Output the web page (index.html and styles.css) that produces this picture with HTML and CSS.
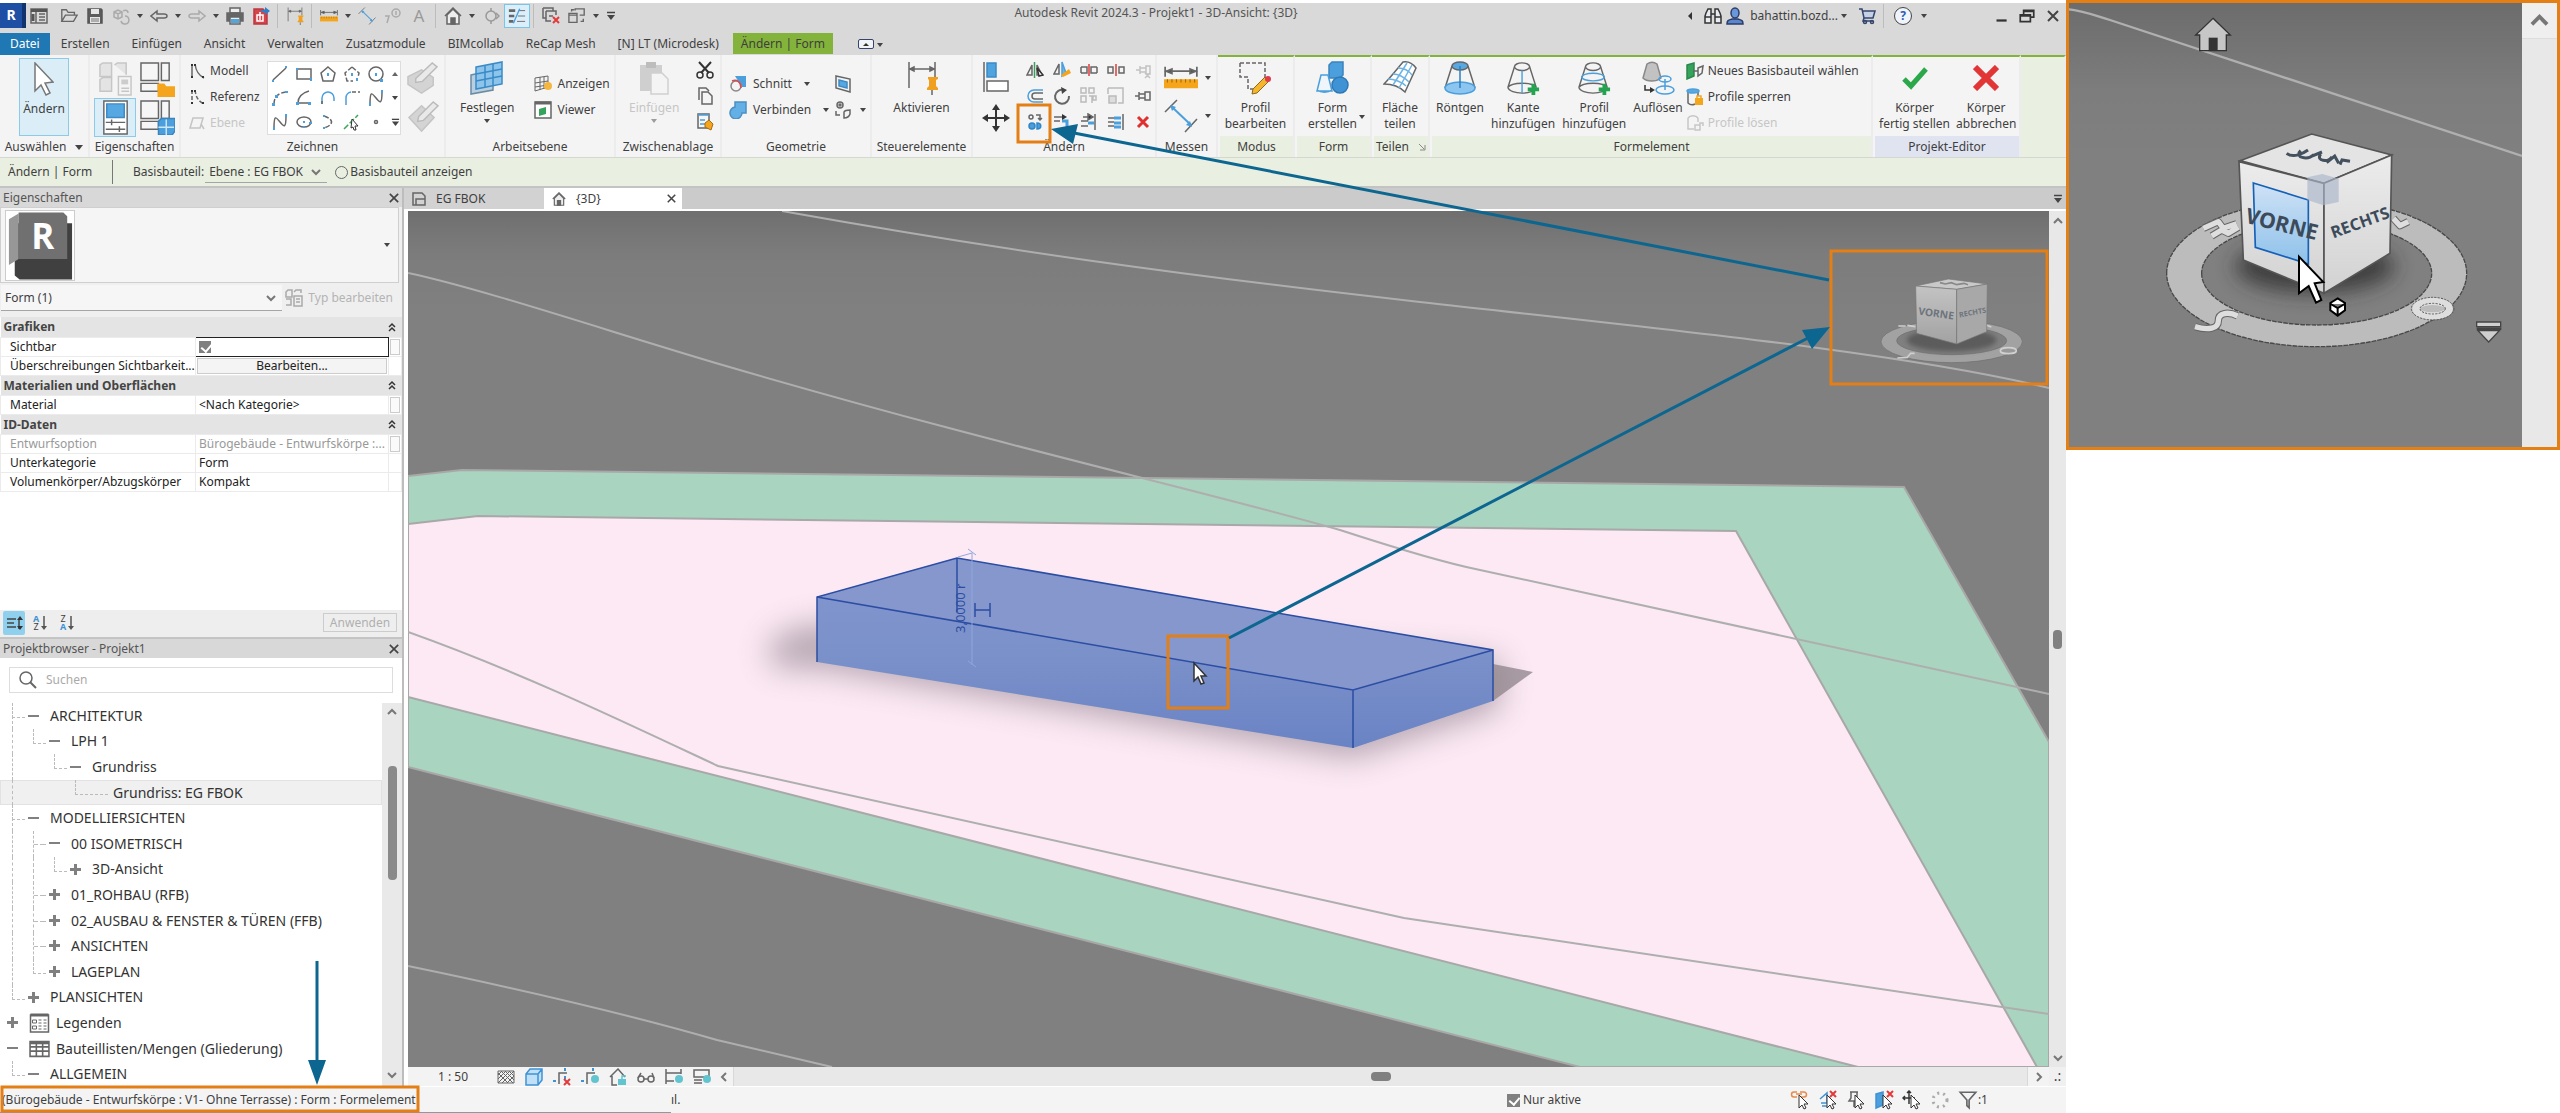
FILE: index.html
```html
<!DOCTYPE html>
<html lang="de">
<head>
<meta charset="utf-8">
<title>Autodesk Revit 2024.3 - Projekt1 - 3D-Ansicht: {3D}</title>
<link rel="stylesheet" href="styles.css">
</head>
<body>
<svg class="sprite" aria-hidden="true">
<defs>
<symbol id="i-list" viewBox="0 0 18 18"><path d="M1 2h16v14H1zM6 2v14M9 7h6M9 10h6M9 13h6" /><path d="M1 3.500h16M3 7v7" stroke-width="3" stroke="#555"/></symbol>
<symbol id="i-folder" viewBox="0 0 20 18"><path d="M2 15V2h5l2 3h7v3M2 15l4-7h13l-4 7z"/></symbol>
<symbol id="i-save" viewBox="0 0 18 18"><path d="M2 2h13l1 1v13H2z" fill="#5c5c5c" stroke="#555"/><path d="M5 2h8v5H5zM4 10h10v6H4z" fill="#e6e6e6" stroke="none"/><path d="M5 12h8M5 14h8" stroke="#777" stroke-width="1"/></symbol>
<symbol id="i-sync" viewBox="0 0 18 18"><path d="M2 5l4-2 4 2v5L6 12l-4-2zM2 5l4 2 4-2M6 7v5M11 4c3-2 5 0 5 2M13 9a4 4 0 1 1-4 5" stroke="#aaa"/></symbol>
<symbol id="i-undo" viewBox="0 0 18 14"><path d="M7 2L1 7l6 5V9h7c2 0 3-1 3-2s-1-2-3-2H7z"/></symbol>
<symbol id="i-print" viewBox="0 0 18 18"><path d="M4 1h10v5H4z" fill="#eee"/><path d="M1 6h16v8H1z" fill="#666"/><path d="M4 10h10v7H4z" fill="#eee"/><path d="M5 12h8v4H5z" fill="#55a5dd" stroke="none"/></symbol>
<symbol id="i-pdf" viewBox="0 0 18 18"><path d="M2 2h9l4 4v11H2z" fill="#d8434a" stroke="#b93a40"/><path d="M5 8h6v6H5zM8 5v8" stroke="#fff"/><path d="M9 4h6" stroke="#2c80c8" stroke-width="2"/><path d="M13 0l5 4-5 4z" fill="#2c80c8" stroke="none"/></symbol>
<symbol id="i-dimpin" viewBox="0 0 30 34"><path d="M2 1v26M28 1v15M3 8h24M3 8l4-2v4zM27 8l-4-2v4z" fill="#555"/><path d="M21 16h10v2l-2 1v6l2 2v2H20v-2l2-2v-6l-1-1z" fill="#f0a01e" stroke="none"/><path d="M25 29v5"/></symbol>
<symbol id="i-measure" viewBox="0 0 30 24"><path d="M1 2v9M29 2v9M2 6h26"/><path d="M2 6l5-2v4zM28 6l-5-2v4z" fill="#555"/><path d="M0 13h30v8H0z" fill="#f5a51c" stroke="none"/><path d="M3 13v3M7 13v3M11 13v3M15 13v3M19 13v3M23 13v3M27 13v3" stroke="#a96a00" stroke-width="1"/></symbol>
<symbol id="i-dim" viewBox="0 0 34 34"><path d="M1 13L13 1M21 33L33 20"/><path d="M8 8l19 18" stroke="#4b9fdc" stroke-width="2"/><path d="M6 6l6 2-4 4zM28 28l-6-2 4-4z" fill="#4b9fdc" stroke="none"/></symbol>
<symbol id="i-tag" viewBox="0 0 18 18"><circle cx="12" cy="6" r="4" stroke="#aaa"/><path d="M12 4v4M1 9h4l-2 7" stroke="#aaa"/></symbol>
<symbol id="i-home" viewBox="0 0 18 18"><path d="M1 9l8-8 8 8" /><path d="M3 8v9h12V8L9 2z" fill="#eee"/><path d="M7 11h4v6H7z" fill="#666"/></symbol>
<symbol id="i-diamond" viewBox="0 0 18 18"><circle cx="9" cy="9" r="5" stroke="#999"/><path d="M9 1v3M9 14v3M14 6l3 3-3 3" stroke="#999"/></symbol>
<symbol id="i-thin" viewBox="0 0 20 18"><path d="M1 3h7M1 9h6M1 15h5" stroke-width="3"/><path d="M12 3h7M11 9h8M10 15h9" stroke-width="1"/><path d="M13 1L6 17" stroke="#4b9fdc"/></symbol>
<symbol id="i-closewin" viewBox="0 0 18 18"><path d="M1 1h10v3M1 1v10h3M4 4h10v4M4 4v10h5M7 9h4"/><path d="M11 10l6 6M17 10l-6 6" stroke="#e23b3b" stroke-width="2"/></symbol>
<symbol id="i-wins" viewBox="0 0 20 18"><path d="M1 6h9v10H1zM1 8h9M8 3V1h10v7h-5M4 4V2h3M14 15h3v-3"/></symbol>
<symbol id="i-more" viewBox="0 0 10 10"><path d="M1 1.500h8" stroke="#444"/><path d="M1 4h8L5 9z" fill="#444" stroke="none"/></symbol>
<symbol id="i-bino" viewBox="0 0 18 16"><path d="M2 5l2-4h3v14H1V8zM16 5l-2-4h-3v14h6V8zM7 6h4M1 9h6M11 9h6" fill="#e8ecf2" stroke="#333"/></symbol>
<symbol id="i-user" viewBox="0 0 18 18"><path d="M1 17c0-4 2-4 5-5h6c3 1 5 1 5 5z" fill="#5a86cd" stroke="#2b3c66"/><ellipse cx="9" cy="6" rx="4" ry="5" fill="#6a96dc" stroke="#2b3c66"/></symbol>
<symbol id="i-cart" viewBox="0 0 18 18"><path d="M1 2h3l2 9h9l2-7H5M6 11l-1 3h10" stroke="#34446c" fill="#c5d0e4"/><circle cx="7" cy="15" r="1.500" stroke="#34446c"/><circle cx="14" cy="15" r="1.500" stroke="#34446c"/></symbol>
<symbol id="i-min" viewBox="0 0 16 16"><path d="M4 12h9" stroke="#333" stroke-width="2"/></symbol>
<symbol id="i-restore" viewBox="0 0 16 16"><path d="M2 7h9v6H2zM5 7V3h9v6h-3M2 8h9M5 4h9" stroke="#333"/></symbol>
<symbol id="i-x" viewBox="0 0 12 12"><path d="M1 1l10 10M11 1L1 11" stroke="#444" stroke-width="2"/></symbol>
<symbol id="i-pointer" viewBox="0 0 20 34"><path d="M1 1l18 19-8 1 5 10-4 2-5-10-6 6z" fill="#fff" stroke="#777"/></symbol>
<symbol id="i-type" viewBox="0 0 36 36"><path d="M2 3l3-2h9v14H2zM17 3l3-2h9v12M2 18l3-2h9v14H2z" fill="#e4e4e4" stroke="#c6c6c6"/><path d="M21 15h13v19H21z" fill="#f4f4f4" stroke="#c6c6c6"/><path d="M24 18h7v5h-7z" fill="#ccc" stroke="none"/><path d="M24 27h8M24 30h8" stroke="#c6c6c6"/></symbol>
<symbol id="i-fam" viewBox="0 0 36 36"><path d="M1 1h18v18H1zM22 1h8v18h-8zM1 22h18v8H1z" fill="#f6f6f6"/><path d="M18 22h7l2 3h9v11H18z" fill="#f5a51c" stroke="none"/></symbol>
<symbol id="i-props" viewBox="0 0 36 36"><path d="M6 1h24v34H6z" fill="#fff"/><path d="M9 4h18v14H9z" fill="#56a8e2" stroke="#3d8ac4"/><path d="M8 23h20M8 30h20M14 20v6M22 27v6"/></symbol>
<symbol id="i-fam2" viewBox="0 0 36 36"><path d="M1 1h18v18H1zM22 1h8v18h-8zM1 22h18v8H1z" fill="#f6f6f6"/><path d="M19 22l3-3h14v13l-3 4H19z" fill="#4b9fdc" stroke="#3a84bd"/><path d="M27 20v16M19 28h16" stroke="#cfe6f6"/></symbol>
<symbol id="i-curve" viewBox="0 0 16 16"><path d="M3 1v13M6 1c1 7 3 11 9 14" /><path d="M2 1h2v2H2zM5 1h2v2H5zM13 13h2v2h-2zM2 13h2v2H2z" fill="#333" stroke="none"/></symbol>
<symbol id="i-ref" viewBox="0 0 16 16"><path d="M3 1v13M6 1c1 7 3 11 9 14" stroke-dasharray="4 2"/><path d="M2 1h2v2H2zM5 1h2v2H5zM13 13h2v2h-2zM2 13h2v2H2z" fill="#333" stroke="none"/></symbol>
<symbol id="i-plane" viewBox="0 0 16 16"><path d="M4 3h10l-3 10H1zM12 9l3 5" stroke="#c4c4c4"/></symbol>
<symbol id="g-line" viewBox="0 0 18 18"><path d="M2 15L15 3"/><path d="M1 15h2v2H1zM14 1h2v2h-2z" fill="#4b9fdc" stroke="none"/></symbol>
<symbol id="g-rect" viewBox="0 0 18 18"><path d="M2 4h14v10H2z"/><path d="M1 3h2v2H1zM15 13h2v3h-2z" fill="#4b9fdc" stroke="none"/></symbol>
<symbol id="g-poly" viewBox="0 0 18 18"><path d="M9 2l7 6-2 8H4L2 8z"/><path d="M8 8h2v3H8z" fill="#4b9fdc" stroke="none"/></symbol>
<symbol id="g-poly2" viewBox="0 0 18 18"><path d="M9 2L2 8l2 8h6M9 2l7 6-1 4" stroke-dasharray="5 2"/><path d="M8 8h2v3H8zM13 13h2v3h-2z" fill="#4b9fdc" stroke="none"/></symbol>
<symbol id="g-circ" viewBox="0 0 18 18"><circle cx="9" cy="9" r="7"/><path d="M8 8h2v3H8zM13 14h3v3h-3z" fill="#4b9fdc" stroke="none"/></symbol>
<symbol id="g-arc" viewBox="0 0 18 18"><path d="M3 15C3 8 7 4 15 3" stroke-dasharray="5 2"/><path d="M1 14h3v3H1zM4 6h3v3H4zM14 2h3v2h-3z" fill="#4b9fdc" stroke="none"/></symbol>
<symbol id="g-arc2" viewBox="0 0 18 18"><path d="M14 2C7 4 3 8 3 14h11"/><path d="M1 13h3v3H1zM13 13h3v3h-3z" fill="#4b9fdc" stroke="none"/></symbol>
<symbol id="g-arc3" viewBox="0 0 18 18"><path d="M3 15V9a6 6 0 0 1 12 0v3" stroke="#4b9fdc"/><path d="M3 15v-3"/></symbol>
<symbol id="g-fillet" viewBox="0 0 18 18"><path d="M3 16V9a6 6 0 0 1 5-6" stroke="#4b9fdc"/><path d="M9 3h8" stroke-dasharray="4 2"/></symbol>
<symbol id="g-spline" viewBox="0 0 18 18"><path d="M3 15C3 1 5 4 9 9s6 7 6-6"/><path d="M2 14h2v3H2zM14 1h2v3h-2z" fill="#4b9fdc" stroke="none"/></symbol>
<symbol id="g-ell" viewBox="0 0 18 18"><ellipse cx="9" cy="9" rx="7" ry="5"/><path d="M8 8h2v2H8zM14 9h3v2h-3zM8 13h2v2H8z" fill="#4b9fdc" stroke="none"/></symbol>
<symbol id="g-earc" viewBox="0 0 18 18"><path d="M5 3c10 3 10 9 0 12" stroke-dasharray="5 2"/><path d="M4 2h2v2H4zM4 14h2v2H4z" fill="#4b9fdc" stroke="none"/></symbol>
<symbol id="g-pick" viewBox="0 0 18 18"><path d="M1 16L15 2" stroke="#3aa85a" stroke-dasharray="6 2"/><path d="M9 6l6 7h-3l1 4-2 0-1-3-2 1z" fill="#fff" stroke="#333" stroke-width="1"/></symbol>
<symbol id="g-point" viewBox="0 0 18 18"><circle cx="9" cy="9" r="1.500"/></symbol>
<symbol id="i-face" viewBox="0 0 34 34"><path d="M1 16L15 9l12 8v8l-12 8-14-9z" fill="#d4d4d4" stroke="#c4c4c4"/><path d="M9 18L26 2l5 4-15 15-7 1z" fill="#e9e9e9" stroke="#bbb"/></symbol>
<symbol id="i-face2" viewBox="0 0 34 34"><path d="M2 18L15 6l13 12-13 14z" fill="#d4d4d4" stroke="#c4c4c4"/><path d="M12 17L27 2l5 4-15 15-6 1z" fill="#e9e9e9" stroke="#bbb"/></symbol>
<symbol id="i-work" viewBox="0 0 34 34"><path d="M1 14l22-5v20L1 33z" fill="#b9cfdf" stroke="#6a8ba2"/><path d="M6 6l26-5v22L6 28z" fill="#8cc4ec" stroke="#3a8ac6"/><path d="M15 4v22M23 3v22M6 13l26-5M6 20l26-5" stroke="#3a8ac6"/></symbol>
<symbol id="i-show" viewBox="0 0 18 18"><path d="M1 3l13-2v11L1 16zM6 2v13M10 2v12M1 8l13-2M1 12l13-2" stroke-width="1"/><circle cx="14" cy="11" r="4" fill="#f5b541" stroke="none"/></symbol>
<symbol id="i-viewer" viewBox="0 0 18 18"><path d="M1 1h16v16H1z" fill="#fff" stroke="#666"/><path d="M1 2h16" stroke-width="3"/><path d="M5 8l7-2v7l-7 2z" fill="#35a35c" stroke="none"/></symbol>
<symbol id="i-paste" viewBox="0 0 30 34"><path d="M1 4h22v26H1z" fill="#cfcfcf" stroke="none"/><path d="M7 1h10v6H7z" fill="#bdbdbd" stroke="none"/><path d="M12 12h11l6 6v15H12z" fill="#f4f4f4" stroke="#d0d0d0"/></symbol>
<symbol id="i-cut" viewBox="0 0 18 18"><path d="M3 1l10 11M15 1L5 12" stroke="#333" stroke-width="2"/><circle cx="4" cy="14" r="3" stroke="#333"/><circle cx="14" cy="14" r="3" stroke="#333"/></symbol>
<symbol id="i-copy" viewBox="0 0 18 18"><path d="M3 13V1h7l3 3M6 5h6l4 4v8H6z"/></symbol>
<symbol id="i-match" viewBox="0 0 18 18"><path d="M2 1h11v14H2z" fill="#f6f6f6"/><path d="M2 2h11M4 7h5M4 11h5" stroke="#4b9fdc"/><path d="M9 10l4-3 4 4-2 6-6-3z" fill="#f5a51c" stroke="#a66e10" stroke-width="1"/></symbol>
<symbol id="i-cope" viewBox="0 0 18 18"><path d="M6 1h11v11h-4z" fill="#4b9fdc" stroke="none"/><circle cx="7" cy="11" r="5" stroke="#888" fill="#f4f4f4"/><path d="M3 6c5-2 9 1 9 7" stroke="#dc4a4a"/></symbol>
<symbol id="i-join" viewBox="0 0 18 18"><path d="M6 1h11v11h-4a6 6 0 1 1-7-6z" fill="#62b0e6" stroke="#4b8fc4"/></symbol>
<symbol id="i-wallo" viewBox="0 0 18 18"><path d="M2 1l14 3v13L2 13z"/><path d="M5 5l8 2v6l-8-2z" fill="#56a8e2" stroke="#3d8ac4"/></symbol>
<symbol id="i-demol" viewBox="0 0 18 18"><circle cx="6" cy="4" r="3"/><circle cx="6" cy="4" r="1"/><path d="M2 10v4h4M10 11c1-2 3-2 6-2v4c-1 3-3 4-6 4z"/></symbol>
<symbol id="i-align" viewBox="0 0 28 32"><path d="M2 1v30"/><path d="M5 2h9v14H5z" fill="#4fa4e0" stroke="#3d8ac4"/><path d="M5 20h21v10H5z" fill="#fff"/></symbol>
<symbol id="i-move" viewBox="0 0 28 28"><path d="M14 4v20M4 14h20" stroke="#333" stroke-width="2"/><path d="M14 0l4 6h-8zM14 28l4-6h-8zM0 14l6-4v8zM28 14l-6-4v8z" fill="#333" stroke="none"/></symbol>
<symbol id="m-mir" viewBox="0 0 18 18"><path d="M6 4v10H1zM11 4l5 10h-5z"/><path d="M8.500 1v16" stroke="#35a35c"/><path d="M11 7l6 7-4 1z" fill="#fff" stroke="#333"/></symbol>
<symbol id="m-mir2" viewBox="0 0 18 18"><path d="M6 3v10H1z"/><path d="M9 1v14l4-3z" fill="#72b5e6" stroke="#4b9fdc"/><path d="M8 14l8-6 2 4-8 4z" fill="#f5a51c" stroke="none"/></symbol>
<symbol id="m-split" viewBox="0 0 18 18"><path d="M1 6h6v6H1M17 6h-6v6h6M1 6v6M17 6v6"/><path d="M9 3v12" stroke="#e23b3b"/></symbol>
<symbol id="m-split2" viewBox="0 0 18 18"><path d="M1 6h5v6H1zM12 6h5v6h-5z"/><path d="M9 3v12" stroke="#e23b3b"/></symbol>
<symbol id="m-unpin" viewBox="0 0 18 18"><path d="M2 9h4M6 5v8M6 7h6M6 11h6M12 5v8h4V5zM11 12l5 5M16 12l-5 5" stroke="#c2c2c2"/></symbol>
<symbol id="m-offset" viewBox="0 0 18 18"><path d="M17 3H8a6 6 0 0 0 0 12h9" stroke="#4b9fdc"/><path d="M17 6H9a3 3 0 0 0 0 6h8"/></symbol>
<symbol id="m-rot" viewBox="0 0 18 18"><path d="M11 3a7 7 0 1 0 5 6" stroke-width="2"/><path d="M8 0l6 3-5 4z" fill="#444" stroke="none"/></symbol>
<symbol id="m-array" viewBox="0 0 18 18"><path d="M1 1h5v5H1zM9 1h5v5H9zM1 9h5v6H1zM9 9h3v7M13 9h3v4h-3z" stroke="#bbb"/></symbol>
<symbol id="m-scale" viewBox="0 0 18 18"><path d="M1 1h15v15h-5M1 1v6" stroke="#bbb"/><path d="M2 9h7v7H2z" fill="#ddd" stroke="#bbb"/></symbol>
<symbol id="m-pin" viewBox="0 0 18 18"><path d="M1 9h4M5 5v8M5 7h6M5 11h6M11 5v8h5V5z"/></symbol>
<symbol id="m-copy" viewBox="0 0 18 18"><circle cx="5" cy="4" r="2"/><path d="M10 2h4v5M12 5l2 2 2-2"/><circle cx="6" cy="13" r="3" fill="#4b9fdc" stroke="#2f86c8"/><path d="M11 10c5 0 5 6 0 6z" fill="#4b9fdc" stroke="#2f86c8"/></symbol>
<symbol id="m-trim" viewBox="0 0 18 18"><path d="M1 4h9M1 8h6M14 8v8"/><path d="M9 8h5v7" stroke="#4b9fdc" stroke-width="3"/><path d="M9 1l5 3-5 3z" fill="#333" stroke="none"/></symbol>
<symbol id="m-ext" viewBox="0 0 18 18"><path d="M15 1v16M1 8h7M1 13h7" /><path d="M8 10h6" stroke="#4b9fdc" stroke-width="3"/><path d="M3 4h5M8 1l5 3-5 3z" fill="#333"/></symbol>
<symbol id="m-ext2" viewBox="0 0 18 18"><path d="M16 1v16M1 5h6M1 9h6M1 13h6" /><path d="M7 5h7M7 10h7M7 14h7" stroke="#4b9fdc" stroke-width="3"/></symbol>
<symbol id="m-del" viewBox="0 0 18 18"><path d="M4 4l10 10M14 4L4 14" stroke="#e02f2f" stroke-width="3"/></symbol>
<symbol id="i-editprof" viewBox="0 0 34 34"><path d="M2 2h25v14M2 2v14h8v12h6" stroke-dasharray="4 2"/><path d="M15 28L27 16l4 4-12 12-5 1z" fill="#f5b52c" stroke="#8a6a20" stroke-width="1"/><circle cx="30" cy="18" r="3" fill="#df3b4a" stroke="none"/></symbol>
<symbol id="i-form" viewBox="0 0 34 34"><path d="M14 4l3-3h11v13l-3 3H14z" fill="#4b9fdc" stroke="#3a84bd"/><path d="M6 14h7l4 16H2zM2 29c4 3 11 3 15 0" stroke="#4b9fdc" fill="#eef6fc"/><circle cx="25" cy="24" r="8" fill="#3f93d4" stroke="#2f78b4"/></symbol>
<symbol id="i-divide" viewBox="0 0 34 34"><path d="M20 1c5-1 10 2 13 6L22 31c-5-5-13-8-21-8C8 16 14 8 20 1z" fill="#fff"/><path d="M24 2L10 24M29 4L16 27M15 7c6 0 11 3 14 7M10 13c6 0 12 4 16 8M5 18c6 0 14 3 18 7" stroke="#6db3e4"/></symbol>
<symbol id="i-xray" viewBox="0 0 32 34"><path d="M8 5L1 27M24 5l7 22"/><ellipse cx="16" cy="5" rx="8" ry="4" fill="#58a8e2"/><ellipse cx="16" cy="27" rx="15" ry="6" fill="#8cc6f0" stroke="#4b9fdc"/><path d="M16 5v22" stroke="#2d7fc0"/></symbol>
<symbol id="i-edge" viewBox="0 0 36 34"><path d="M9 5L2 27M25 5l7 22M2 27c2 8 28 8 30 0M2 27c4-6 26-6 30 0" /><ellipse cx="17" cy="5" rx="8" ry="4"/><path d="M17 9v24" stroke="#4b9fdc"/><path d="M29 23v12M23 29h12" stroke="#23a550" stroke-width="4"/></symbol>
<symbol id="i-addprof" viewBox="0 0 36 34"><path d="M9 5L2 27M25 5l7 22M2 27c2 8 28 8 30 0M2 27c4-6 26-6 30 0" /><ellipse cx="17" cy="5" rx="8" ry="4"/><ellipse cx="17" cy="16" rx="12" ry="4" stroke="#4b9fdc"/><path d="M29 23v12M23 29h12" stroke="#23a550" stroke-width="4"/></symbol>
<symbol id="i-dissolve" viewBox="0 0 34 34"><path d="M6 3c3-2 7-2 10 0l4 14c-5 4-14 4-18 0z" fill="#c2c2c2" stroke="#888"/><path d="M4 24v5h6" stroke="#333"/><path d="M9 26l5 3-5 3z" fill="#333" stroke="none"/><ellipse cx="24" cy="18" rx="6" ry="3" stroke="#4b9fdc"/><ellipse cx="24" cy="29" rx="9" ry="4" stroke="#4b9fdc"/><path d="M24 18v11" stroke="#4b9fdc"/></symbol>
<symbol id="i-host" viewBox="0 0 18 18"><path d="M1 3l7-2v13l-7 3z" fill="#35a35c" stroke="#2a874a"/><path d="M7 9h5M12 6l5-2-1 7-4 3z"/></symbol>
<symbol id="i-lock" viewBox="0 0 18 18"><path d="M2 4v11c2 2 5 2 7 1M12 4v4"/><ellipse cx="7" cy="3" rx="6" ry="2" fill="#58a8e2" stroke="#4b9fdc"/><path d="M9 10h8v7H9z" fill="#f5a51c" stroke="none"/><path d="M11 10V8h4v2" stroke="#f5a51c"/></symbol>
<symbol id="i-unlock" viewBox="0 0 18 18"><path d="M2 4v11h6M12 4v4M2 4c2-3 8-3 10 0M9 11h5v5H9zM14 11V9h3v3" stroke="#c6c6c6"/></symbol>
<symbol id="i-check" viewBox="0 0 26 26"><path d="M2 14l7 7L24 4" stroke="#2ba84a" stroke-width="5"/></symbol>
<symbol id="i-cancel" viewBox="0 0 26 26"><path d="M2 2l22 22M24 2L2 24" stroke="#e23636" stroke-width="6"/></symbol>
<symbol id="i-launch" viewBox="0 0 8 8"><path d="M1 1l5 5M7 2v5H2" stroke="#888" stroke-width="1"/></symbol>
<symbol id="i-chev" viewBox="0 0 10 10"><path d="M1 3l4 4 4-4" stroke="#777" stroke-width="2"/></symbol>
<symbol id="i-coll" viewBox="0 0 8 10"><path d="M1 5l3-3 3 3M1 9l3-3 3 3" stroke="#333"/></symbol>
<symbol id="i-grp" viewBox="0 0 18 18"><path d="M2 5h9M2 9h7M2 13h9M14 5v10" stroke="#444"/><path d="M12 6l3-4 3 4zM12 12l3 4 3-4z" fill="#333" stroke="none"/></symbol>
<symbol id="i-arrdn" viewBox="0 0 6 16"><path d="M3 1v12" stroke="#555"/><path d="M0 11h6l-3 4z" fill="#555" stroke="none"/></symbol>
<symbol id="i-search" viewBox="0 0 18 18"><circle cx="7" cy="7" r="6"/><path d="M11 11l6 6" stroke-width="2"/></symbol>
<symbol id="i-legend" viewBox="0 0 20 20"><path d="M1 2h18v17H1z"/><path d="M1 2h18" stroke-width="3"/><path d="M3 7h4v3H3zM3 13h4v3H3zM9 7h3M14 7h3M9 10h3M14 10h3M9 13h3M14 13h3M9 16h3M14 16h3" stroke-width="1"/></symbol>
<symbol id="i-sched" viewBox="0 0 20 18"><path d="M1 2h18v14H1zM1 7h18M1 11h18M7 2v14M13 2v14"/><path d="M1 3h18" stroke-width="3"/></symbol>
<symbol id="v-hatch" viewBox="0 0 18 14"><path d="M1 1h16v12H1z" stroke-width="1"/><path d="M1 3l10 10M4 1l12 12M8 1l9 9M12 1l5 5M5 13L17 1M1 13L13 1M1 9l8-8M10 13l7-7M1 5l4-4" stroke-width="1"/></symbol>
<symbol id="v-cube" viewBox="0 0 18 18"><path d="M1 6l4-5h12v11l-4 5H1zM1 6h12M13 6v11M13 6l4-5" fill="#bfe0f6" stroke="#3f93d4"/></symbol>
<symbol id="v-crop" viewBox="0 0 18 18"><path d="M6 16V5h8"/><path d="M0 13h3M12 0v3M12 8v3" stroke="#3f93d4" stroke-width="2"/></symbol>
<symbol id="v-house" viewBox="0 0 18 18"><path d="M1 9l8-8 7 8M3 8v9h5"/><path d="M9 11h8v6H9z" fill="#62c4cf" stroke="none"/><path d="M13 11V8h4" stroke="#62c4cf"/></symbol>
<symbol id="v-glass" viewBox="0 0 18 12"><circle cx="4" cy="8" r="3"/><circle cx="14" cy="8" r="3"/><path d="M7 8h4M1 7l3-5M17 7l-2-5"/></symbol>
<symbol id="v-con" viewBox="0 0 18 18"><path d="M1 1v15M16 1v5M1 5h15M1 13h8"/></symbol>
<symbol id="v-con2" viewBox="0 0 18 18"><path d="M1 2h15v7H1zM1 12h8M1 15h8"/></symbol>
<symbol id="s-cur" viewBox="0 0 20 20"><path d="M9 5l9 9h-4l2 4-2 1-2-4-3 3z" fill="#fff" stroke="#333" stroke-width="1"/></symbol>
<symbol id="s-filter" viewBox="0 0 16 18"><path d="M1 2h14L9 9v7l-2-2V9z"/></symbol>
</defs>
</svg>

<div class="page">
<main class="app">

<header class="titlebar">
  <div class="quick">
    <span class="logo">R</span>
    <button class="q gap" aria-label="Start"><svg><use href="#i-list"/></svg></button>
    <button class="q" aria-label="Öffnen"><svg><use href="#i-folder"/></svg></button>
    <button class="q" aria-label="Speichern"><svg><use href="#i-save"/></svg></button>
    <button class="q" aria-label="Synchronisieren"><svg><use href="#i-sync"/></svg></button>
    <button class="drop" aria-label="Mehr"></button>
    <button class="q" aria-label="Rückgängig"><svg><use href="#i-undo"/></svg></button>
    <button class="drop" aria-label="Mehr"></button>
    <button class="q faint flip" aria-label="Wiederherstellen"><svg><use href="#i-undo"/></svg></button>
    <button class="drop" aria-label="Mehr"></button>
    <button class="q" aria-label="Drucken"><svg><use href="#i-print"/></svg></button>
    <button class="q" aria-label="PDF"><svg><use href="#i-pdf"/></svg></button>
    <i class="sep"></i>
    <button class="q" aria-label="Aktivieren"><svg><use href="#i-dimpin"/></svg></button>
    <i class="sep"></i>
    <button class="q" aria-label="Messen"><svg><use href="#i-measure"/></svg></button>
    <button class="drop" aria-label="Mehr"></button>
    <button class="q" aria-label="Bemaßung"><svg><use href="#i-dim"/></svg></button>
    <button class="q" aria-label="Beschriftung"><svg><use href="#i-tag"/></svg></button>
    <button class="q letter">A</button>
    <i class="sep"></i>
    <button class="q" aria-label="3D"><svg><use href="#i-home"/></svg></button>
    <button class="drop" aria-label="Mehr"></button>
    <button class="q" aria-label="Schnitt"><svg><use href="#i-diamond"/></svg></button>
    <button class="q on" aria-label="Dünne Linien"><svg><use href="#i-thin"/></svg></button>
    <i class="sep"></i>
    <button class="q" aria-label="Inaktive schließen"><svg><use href="#i-closewin"/></svg></button>
    <button class="q" aria-label="Fenster"><svg><use href="#i-wins"/></svg></button>
    <button class="drop" aria-label="Mehr"></button>
    <button class="drop wide" aria-label="Anpassen"><svg><use href="#i-more"/></svg></button>
  </div>
  <h1>Autodesk Revit 2024.3 - Projekt1 - 3D-Ansicht: {3D}</h1>
  <div class="account">
    <button class="back" aria-label="Zurück"></button>
    <button class="q" aria-label="Suchen"><svg><use href="#i-bino"/></svg></button>
    <button class="user"><svg><use href="#i-user"/></svg>bahattin.bozd...</button>
    <button class="drop" aria-label="Mehr"></button>
    <button class="q cart" aria-label="Shop"><svg><use href="#i-cart"/></svg></button>
    <i class="sep"></i>
    <button class="help">?</button>
    <button class="drop" aria-label="Mehr"></button>
    <div class="win">
      <button class="q" aria-label="Minimieren"><svg><use href="#i-min"/></svg></button>
      <button class="q" aria-label="Wiederherstellen"><svg><use href="#i-restore"/></svg></button>
      <button class="q x" aria-label="Schließen"><svg><use href="#i-x"/></svg></button>
    </div>
  </div>
</header>

<nav class="tabs">
  <a href="#" class="file">Datei</a><a href="#">Erstellen</a><a href="#">Einfügen</a><a href="#">Ansicht</a><a href="#">Verwalten</a><a href="#">Zusatzmodule</a><a href="#">BIMcollab</a><a href="#">ReCap Mesh</a><a href="#">[N] LT (Microdesk)</a><a href="#" class="ctx">Ändern | Form</a>
  <button class="fold" aria-label="Multifunktionsleiste minimieren"><i></i></button><button class="drop" aria-label="Mehr"></button>
</nav>

<section class="ribbon">
  <div class="panel"><div class="body center">
    <button class="big active"><svg class="ptr"><use href="#i-pointer"/></svg>Ändern</button></div>
    <div class="cap">Auswählen<i class="tri"></i></div></div>

  <div class="panel"><div class="body quad">
    <button aria-label="Familientypen"><svg><use href="#i-type"/></svg></button><button aria-label="Familie"><svg><use href="#i-fam"/></svg></button>
    <button class="active" aria-label="Eigenschaften"><svg><use href="#i-props"/></svg></button><button aria-label="Kategorie"><svg><use href="#i-fam2"/></svg></button></div>
    <div class="cap">Eigenschaften</div></div>

  <div class="panel"><div class="body draw">
    <div class="stack"><button class="row"><svg><use href="#i-curve"/></svg>Modell</button><button class="row"><svg><use href="#i-ref"/></svg>Referenz</button><button class="row off"><svg><use href="#i-plane"/></svg>Ebene</button></div>
    <div class="gallery">
      <svg><use href="#g-line"/></svg><svg><use href="#g-rect"/></svg><svg><use href="#g-poly"/></svg><svg><use href="#g-poly2"/></svg><svg><use href="#g-circ"/></svg><i class="tri up"></i>
      <svg><use href="#g-arc"/></svg><svg><use href="#g-arc2"/></svg><svg><use href="#g-arc3"/></svg><svg><use href="#g-fillet"/></svg><svg><use href="#g-spline"/></svg><i class="tri"></i>
      <svg><use href="#g-spline"/></svg><svg><use href="#g-ell"/></svg><svg><use href="#g-earc"/></svg><svg><use href="#g-pick"/></svg><svg><use href="#g-point"/></svg><svg class="more"><use href="#i-more"/></svg>
    </div>
    <div class="faces"><svg><use href="#i-face"/></svg><svg><use href="#i-face2"/></svg></div></div>
    <div class="cap">Zeichnen</div></div>

  <div class="panel"><div class="body work">
    <button class="big"><svg><use href="#i-work"/></svg>Festlegen<i class="tri"></i></button>
    <div class="stack two"><button class="row"><svg><use href="#i-show"/></svg>Anzeigen</button><button class="row"><svg><use href="#i-viewer"/></svg>Viewer</button></div></div>
    <div class="cap">Arbeitsebene</div></div>

  <div class="panel"><div class="body clip">
    <button class="big off"><svg><use href="#i-paste"/></svg>Einfügen<i class="tri"></i></button>
    <div class="stack"><svg><use href="#i-cut"/></svg><svg><use href="#i-copy"/></svg><svg><use href="#i-match"/></svg></div></div>
    <div class="cap">Zwischenablage</div></div>

  <div class="panel"><div class="body geo">
    <div class="stack two"><button class="row"><svg><use href="#i-cope"/></svg>Schnitt<i class="tri"></i></button><button class="row"><svg><use href="#i-join"/></svg>Verbinden<i class="tri"></i></button></div>
    <div class="stack two"><button class="row" aria-label="Öffnung"><svg><use href="#i-wallo"/></svg></button><button class="row" aria-label="Abbruch"><svg><use href="#i-demol"/></svg><i class="tri"></i></button></div></div>
    <div class="cap">Geometrie</div></div>

  <div class="panel"><div class="body center"><button class="big"><svg><use href="#i-dimpin"/></svg>Aktivieren</button></div>
    <div class="cap">Steuerelemente</div></div>

  <div class="panel"><div class="body modify">
    <div class="pair"><svg><use href="#i-align"/></svg><svg><use href="#i-move"/></svg></div>
    <div class="tools">
      <svg><use href="#m-mir"/></svg><svg><use href="#m-mir2"/></svg><svg><use href="#m-split"/></svg><svg><use href="#m-split2"/></svg><svg><use href="#m-unpin"/></svg>
      <svg><use href="#m-offset"/></svg><svg><use href="#m-rot"/></svg><svg><use href="#m-array"/></svg><svg><use href="#m-scale"/></svg><svg><use href="#m-pin"/></svg>
      <svg><use href="#m-copy"/></svg><svg><use href="#m-trim"/></svg><svg><use href="#m-ext"/></svg><svg><use href="#m-ext2"/></svg><svg><use href="#m-del"/></svg>
    </div></div>
    <div class="cap">Ändern</div></div>

  <div class="panel"><div class="body meas">
    <svg><use href="#i-measure"/></svg><i class="tri"></i><svg><use href="#i-dim"/></svg><i class="tri"></i></div>
    <div class="cap">Messen</div></div>

  <div class="panel green"><div class="body center"><button class="big"><svg><use href="#i-editprof"/></svg>Profil<br>bearbeiten</button></div>
    <div class="cap">Modus</div></div>
  <div class="panel green"><div class="body center"><button class="big aside"><svg><use href="#i-form"/></svg>Form<br>erstellen<i class="tri"></i></button></div>
    <div class="cap">Form</div></div>
  <div class="panel green"><div class="body center"><button class="big"><svg><use href="#i-divide"/></svg>Fläche<br>teilen</button></div>
    <div class="cap">Teilen<svg><use href="#i-launch"/></svg></div></div>
  <div class="panel green"><div class="body element">
    <button class="big"><svg><use href="#i-xray"/></svg>Röntgen</button><button class="big"><svg><use href="#i-edge"/></svg>Kante<br>hinzufügen</button><button class="big"><svg><use href="#i-addprof"/></svg>Profil<br>hinzufügen</button><button class="big"><svg><use href="#i-dissolve"/></svg>Auflösen</button>
    <div class="stack"><button class="row"><svg><use href="#i-host"/></svg>Neues Basisbauteil wählen</button><button class="row"><svg><use href="#i-lock"/></svg>Profile sperren</button><button class="row off"><svg><use href="#i-unlock"/></svg>Profile lösen</button></div></div>
    <div class="cap">Formelement</div></div>
  <div class="panel green editor"><div class="body finish">
    <button class="big"><svg><use href="#i-check"/></svg>Körper<br>fertig stellen</button><button class="big"><svg><use href="#i-cancel"/></svg>Körper<br>abbrechen</button></div>
    <div class="cap">Projekt-Editor</div></div>
  <div class="panel green rest"></div>
</section>

<section class="options">
  <span class="mode">Ändern | Form</span>
  <label for="host">Basisbauteil:</label>
  <span class="pick"><select id="host"><option>Ebene : EG FBOK</option></select><svg><use href="#i-chev"/></svg></span>
  <label class="radio"><input type="radio" name="show">Basisbauteil anzeigen</label>
</section>

<div class="work-area">
  <aside class="side">
    <section class="props">
      <h2>Eigenschaften<button aria-label="Schließen"><svg><use href="#i-x"/></svg></button></h2>
      <div class="typebox">
        <svg class="thumb" viewBox="0 0 70 70"><path d="M12 12h56v58H14l-5-4V48z" fill="#404040"/><path d="M3 8l10-6v47L3 55z" fill="#979797"/><path d="M13 1h46l4 4v44H13z" fill="#707070"/><text x="38" y="39" text-anchor="middle">R</text></svg>
        <i class="tri"></i>
      </div>
      <div class="instance">
        <span class="pick"><select aria-label="Element"><option>Form (1)</option></select><svg><use href="#i-chev"/></svg></span>
        <button disabled><svg viewBox="0 0 18 18"><path d="M1 3l2-2h4v7H1zM9 3l2-2h5v3M1 10h5v6H1M9 7h8v10H9zM11 10h4M11 13h4"/></svg>Typ bearbeiten</button>
      </div>
      <table>
        <colgroup><col class="c1"><col class="c2"><col class="c3"></colgroup>
        <tbody>
        <tr class="head"><th colspan="2">Grafiken</th><td><svg><use href="#i-coll"/></svg></td></tr>
        <tr><td><label for="vis">Sichtbar</label></td><td class="focus"><input id="vis" type="checkbox" checked></td><td><button aria-label="Parameter"></button></td></tr>
        <tr><td>Überschreibungen Sichtbarkeit...</td><td class="edit"><button>Bearbeiten...</button></td><td></td></tr>
        <tr class="head"><th colspan="2">Materialien und Oberflächen</th><td><svg><use href="#i-coll"/></svg></td></tr>
        <tr><td>Material</td><td>&lt;Nach Kategorie&gt;</td><td><button aria-label="Parameter"></button></td></tr>
        <tr class="head"><th colspan="2">ID-Daten</th><td><svg><use href="#i-coll"/></svg></td></tr>
        <tr class="ro"><td>Entwurfsoption</td><td>Bürogebäude - Entwurfskörpe :...</td><td><button aria-label="Parameter"></button></td></tr>
        <tr><td>Unterkategorie</td><td>Form</td><td></td></tr>
        <tr><td>Volumenkörper/Abzugskörper</td><td>Kompakt</td><td></td></tr>
        </tbody>
      </table>
      <div class="sort">
        <button class="on" aria-label="Gruppieren"><svg><use href="#i-grp"/></svg></button>
        <button aria-label="Aufsteigend"><span><b>A</b>Z</span><svg><use href="#i-arrdn"/></svg></button>
        <button aria-label="Absteigend"><span>Z<b>A</b></span><svg><use href="#i-arrdn"/></svg></button>
        <button class="apply" disabled>Anwenden</button>
      </div>
    </section>

    <section class="browser">
      <h2>Projektbrowser - Projekt1<button aria-label="Schließen"><svg><use href="#i-x"/></svg></button></h2>
      <label class="search"><svg><use href="#i-search"/></svg><input type="text" placeholder="Suchen" aria-label="Suchen"></label>
      <div class="treebox">
        <ul class="tree">
          <li class="l1 minus g"><i></i>ARCHITEKTUR</li>
          <li class="l2 minus g last trunk"><i></i>LPH 1</li>
          <li class="l3 minus g last trunk"><i></i>Grundriss</li>
          <li class="l4 g last sel trunk"><i></i>Grundriss: EG FBOK</li>
          <li class="l1 minus g"><i></i>MODELLIERSICHTEN</li>
          <li class="l2 minus g trunk"><i></i>00 ISOMETRISCH</li>
          <li class="l3 plus g last two trunk"><i></i>3D-Ansicht</li>
          <li class="l2 plus g trunk"><i></i>01_ROHBAU (RFB)</li>
          <li class="l2 plus g trunk"><i></i>02_AUSBAU &amp; FENSTER &amp; TÜREN (FFB)</li>
          <li class="l2 plus g trunk"><i></i>ANSICHTEN</li>
          <li class="l2 plus g last trunk"><i></i>LAGEPLAN</li>
          <li class="l1 plus g last"><i></i>PLANSICHTEN</li>
          <li class="l0 plus"><i></i><svg><use href="#i-legend"/></svg>Legenden</li>
          <li class="l0 minus"><i></i><svg><use href="#i-sched"/></svg>Bauteillisten/Mengen (Gliederung)</li>
          <li class="l1 minus g last"><i></i>ALLGEMEIN</li>
        </ul>
        <div class="vbar"><svg class="up"><use href="#i-chev"/></svg><i></i><svg><use href="#i-chev"/></svg></div>
      </div>
    </section>
  </aside>

  <section class="view">
    <nav class="viewtabs">
      <a href="#"><svg viewBox="0 0 14 14"><path d="M1 1h9l3 3v9H1zM4 13V7h9"/></svg>EG FBOK</a>
      <a href="#" class="cur"><svg><use href="#i-home"/></svg>{3D}<svg class="x"><use href="#i-x"/></svg></a>
      <svg class="menu"><use href="#i-more"/></svg>
    </nav>
    <div class="stage">
      <svg class="scene" viewBox="408 211 1641 856" preserveAspectRatio="none">
        <defs>
          <linearGradient id="sky" x1="0" y1="0" x2="0" y2="1"><stop offset="0" stop-color="#6f6f6f"/><stop offset=".05" stop-color="#7c7c7c"/><stop offset=".12" stop-color="#808080"/></linearGradient>
          <linearGradient id="blk" x1="0" y1="0" x2="0" y2="1"><stop offset="0" stop-color="#8396cf"/><stop offset=".5" stop-color="#7b91ca"/><stop offset="1" stop-color="#6a83c4"/></linearGradient>
          <linearGradient id="cubeL" x1="0" y1="0" x2="0" y2="1"><stop offset="0" stop-color="#c3c3c3"/><stop offset="1" stop-color="#a2a2a2"/></linearGradient>
          <filter id="soft" x="-20%" y="-60%" width="140%" height="220%"><feGaussianBlur stdDeviation="16"/></filter>
          <filter id="soft2" x="-20%" y="-40%" width="140%" height="180%"><feGaussianBlur stdDeviation="8"/></filter>
        </defs>
        <path d="M408 211h1641v856H408z" fill="url(#sky)"/>
        <path d="M408 476L462 470L1904 487L2049 742V1067H1580L408 767z" fill="#a9d4bf" stroke="#a8a8a8" stroke-width="2"/>
        <path d="M408 524L478 516L1736 531L2037 1067H1858L408 697z" fill="#fce9f4" stroke="#a8a8a8" stroke-width="2"/>
        <g fill="none" stroke="#aeaeae" stroke-width="2">
          <path d="M782 211C1000 250 1180 275 1420 302S1900 352 2049 388"/>
          <path d="M408 273C480 288 620 335 726 366C1000 446 1200 490 1340 530C1420 556 1460 566 1480 570L2049 694"/>
          <path d="M408 632C520 672 620 720 718 766L1404 918L2049 1014"/>
          <path d="M408 966C500 985 620 1012 717 1040L832 1067"/>
        </g>
        <path d="M817 625C770 630 755 655 780 668L817 668L1353 758L1500 708L1500 660z" fill="#5f555f" opacity=".45" filter="url(#soft)"/>
        <path d="M1493 664L1533 672L1493 701z" fill="#8d8288" opacity=".75"/>
        <path d="M817 597L957 558L1493 650V701L1353 748L817 662z" fill="url(#blk)"/>
        <path d="M817 597L957 558L1493 650L1353 690z" fill="#8597cc"/>
        <path d="M817 662V597L957 558L1493 650V701M817 597L1353 690L1493 650M1353 690V748M957 558V612" fill="none" stroke="#2b4da3" stroke-width="1.500"/>
        <path d="M972 553V665M958 557l14-4M968 549l8 6M968 661l8 6" fill="none" stroke="#8ea6de" stroke-width="1"/>
        <path d="M975 603v14M990 603v14M975 610h15" fill="none" stroke="#2b4da3" stroke-width="1.500"/>
        <text class="dimtext" transform="translate(965 633) rotate(-90)">3,0000 r</text>
        <path d="M1194 663l12 13h-5l3 7-3 1-3-7-4 4z" fill="#fff" stroke="#333"/>
        <svg x="1829" y="249" width="220" height="136" viewBox="117 207 660 408">
          <path fill-rule="evenodd" d="M273 485a212 63 0 0 1 424 0a212 63 0 0 1-424 0M320 482a165 42 0 0 0 330 0a165 42 0 0 0-330 0" fill="#a2a2a2" stroke="#6e6e6e" stroke-width="2"/>
          <ellipse cx="485" cy="480" rx="135" ry="34" fill="#5c5c5c" filter="url(#soft2)"/>
          <ellipse cx="655" cy="512" rx="24" ry="9" fill="#999" stroke="#d0d0d0" stroke-width="5"/>
          <path d="M325 438h22M352 436l24 4M322 534l30-2 10-12h12M590 436l14 5" stroke="#cfcfcf" stroke-width="5" fill="none"/>
          <path d="M377 318L475 297L592 312L500 328z" fill="#c9c9c9" stroke="#777" stroke-width="2"/>
          <path d="M377 318L500 328V492L380 460z" fill="url(#cubeL)" stroke="#777" stroke-width="2"/>
          <path d="M500 328L592 312L590 455L500 492z" fill="#a8a8a8" stroke="#777" stroke-width="2"/>
          <text class="face" font-size="31" text-anchor="middle" transform="translate(437 411) rotate(8)">VORNE</text>
          <text class="face" font-size="22" text-anchor="middle" transform="translate(549 405) rotate(-10)">RECHTS</text>
          <path d="M450 308l16 4 18-4 16 6 22-4 12 4" stroke="#888" stroke-width="5" fill="none"/>
        </svg>
      </svg>
      <div class="vscroll"><svg class="up"><use href="#i-chev"/></svg><i></i><svg><use href="#i-chev"/></svg></div>
      <div class="viewbar">
        <span>1 : 50</span>
        <svg><use href="#v-hatch"/></svg><svg><use href="#v-cube"/></svg>
        <svg viewBox="0 0 18 18"><use href="#v-crop"/><path d="M11 11l6 6M17 11l-6 6" stroke="#e23b3b" stroke-width="2"/></svg>
        <svg viewBox="0 0 18 18"><use href="#v-crop"/><circle cx="14" cy="11" r="4" fill="#62c4cf" stroke="none"/></svg>
        <svg><use href="#v-house"/></svg><svg><use href="#v-glass"/></svg>
        <svg viewBox="0 0 18 18"><use href="#v-con"/><circle cx="14" cy="11" r="4" fill="#62c4cf" stroke="none"/></svg>
        <svg viewBox="0 0 18 18"><use href="#v-con2"/><circle cx="14" cy="11" r="4" fill="#62c4cf" stroke="none"/></svg>
        <svg class="left"><use href="#i-chev"/></svg>
        <div class="track"><i></i></div>
        <svg class="right"><use href="#i-chev"/></svg>
      </div>
      <div class="grip">.:</div>
    </div>
  </section>
</div>

<footer class="status">
  <span class="hint">(Bürogebäude - Entwurfskörpe : V1- Ohne Terrasse) : Form : Formelement</span>
  <span class="bars">ıl.</span>
  <label class="only"><input type="checkbox" checked>Nur aktive</label>
  <div class="sel-tools">
    <svg viewBox="0 0 20 20"><path d="M7 7H4a2 2 0 0 1 0-5h3M10 2h4a2 2 0 0 1 0 5h-4M6 4h6" stroke="#e88a4a"/><use href="#s-cur"/></svg>
    <svg viewBox="0 0 20 20"><path d="M2 9l7-6v10H3M4 16h6" stroke="#3f93d4"/><use href="#s-cur"/><path d="M12 1l6 6M18 1l-6 6" stroke="#e23b3b" stroke-width="2"/></svg>
    <svg viewBox="0 0 20 20"><path d="M4 2h8M5 2v6l-2 3h10l-2-3V2M8 11v6"/><use href="#s-cur"/></svg>
    <svg viewBox="0 0 20 20"><path d="M2 4l7-2v13l-7 3z" fill="#4b9fdc" stroke="#3f93d4"/><use href="#s-cur"/><path d="M13 1l6 6M19 1l-6 6" stroke="#e23b3b" stroke-width="2"/></svg>
    <svg viewBox="0 0 20 20"><path d="M7 1v13M1 8h12M5 3l2-2 2 2M3 6L1 8l2 2" stroke="#333"/><use href="#s-cur"/></svg>
    <svg viewBox="0 0 20 20"><circle cx="10" cy="10" r="7" stroke="#aaa" stroke-width="3" stroke-dasharray="2 4"/></svg>
    <svg><use href="#s-filter"/></svg><span>:1</span>
  </div>
</footer>

<svg class="marks" viewBox="0 0 2066 1113" preserveAspectRatio="none" aria-hidden="true">
  <g fill="none" stroke="#e37f14" stroke-width="3">
    <path d="M1018 105h32v37h-32zM1168 636h60v72h-60zM1831 251h216v133h-216z"/><path d="M2 1087h416v24H2z"/>
  </g>
  <g fill="none" stroke="#0c6690" stroke-width="3"><path d="M1829 280L1074 133M1229 638L1808 338M317 961V1062"/></g>
  <path d="M1051 129L1078 124L1073 144zM1830 327L1802 330L1812 349zM317 1085L308 1060H326z" fill="#0c6690"/>
</svg>
</main>

<aside class="inset">
  <svg class="closeup" viewBox="27 9 1359 1332" preserveAspectRatio="none">
    <defs>
      <linearGradient id="top2" x1="0" y1="0" x2="0" y2="1"><stop offset="0" stop-color="#6c6c6c"/><stop offset=".2" stop-color="#7d7d7d"/><stop offset=".35" stop-color="#808080"/></linearGradient>
      <linearGradient id="fl" x1="0" y1="0" x2="0" y2="1"><stop offset="0" stop-color="#ececec"/><stop offset="1" stop-color="#d2d2d2"/></linearGradient>
      <linearGradient id="fb" x1="0" y1="0" x2="0" y2="1"><stop offset="0" stop-color="#cfe2f6"/><stop offset="1" stop-color="#8ec1ea"/></linearGradient>
      <filter id="soft3" x="-30%" y="-60%" width="160%" height="220%"><feGaussianBlur stdDeviation="30"/></filter>
    </defs>
    <path d="M27 9h1359v1332H27z" fill="url(#top2)"/>
    <path d="M27 28C60 30 80 38 150 60L1386 468" fill="none" stroke="#b0b0b0" stroke-width="7"/>
    <path d="M459 55l52 50h-12v47h-80v-47h-12z" fill="#c6c6c6" stroke="#333" stroke-width="4"/><path d="M446 113h27v40h-27z" fill="#333"/>
    <path fill-rule="evenodd" d="M320 820a450 220 0 0 1 900 0a450 220 0 0 1-900 0M425 820a345 155 0 0 0 690 0a345 155 0 0 0-690 0" fill="#bcbcbc" stroke="#484848" stroke-width="4" stroke-dasharray="14 3"/>
    <ellipse cx="765" cy="800" rx="240" ry="80" fill="#2c2c2c" opacity=".75" filter="url(#soft3)"/>
    <ellipse cx="1118" cy="926" rx="50" ry="22" fill="none" stroke="#dedede" stroke-width="22"/><ellipse cx="1118" cy="926" rx="64" ry="34" fill="none" stroke="#555" stroke-width="3" stroke-dasharray="6 4"/><ellipse cx="1118" cy="926" rx="38" ry="16" fill="none" stroke="#555" stroke-width="3" stroke-dasharray="6 4"/>
    <g fill="none" stroke-linejoin="round">
      <path d="M405 980c40 12 70 6 70-18s30-28 58-14M430 685l45-20 15 20 40-14M455 708l30-18 20 10 30-18M1000 655l20 22 25-12" stroke="#666" stroke-width="22"/>
      <path d="M405 980c40 12 70 6 70-18s30-28 58-14M430 685l45-20 15 20 40-14M455 708l30-18 20 10 30-18M1000 655l20 22 25-12" stroke="#dedede" stroke-width="16"/>
    </g>
    <g stroke="#555" stroke-width="5">
      <path d="M540 482L755 402L995 465L792 550z" fill="#e4e4e4"/>
      <path d="M537 485L792 550V880L550 780z" fill="url(#fl)"/>
      <path d="M792 550L995 465L990 760L792 880z" fill="url(#fl)"/>
    </g>
    <path d="M680 460c20 16 50 0 64 -10M722 452c-20 20 20 30 40 12M752 470l34 -14M782 462c-16 22 24 26 34 8M800 488l24 -20 12 22M840 494l6 -14 24 4" fill="none" stroke="#43505e" stroke-width="9"/>
    <path d="M580 549L745 600V792L586 742z" fill="url(#fb)" stroke="#1560b8" stroke-width="5"/>
    <path d="M742 532l45-10 49 14v70l-46 10-48-16z" fill="#aab5ca" opacity=".65"/>
    <text class="face2" font-size="64" text-anchor="middle" transform="translate(660 694) rotate(14)">VORNE</text>
    <text class="face2" font-size="49" text-anchor="middle" transform="translate(906 684) rotate(-20)">RECHTS</text>
    <path d="M717 770L790 846L764 850L784 900L768 908L746 858L717 880z" fill="#fff" stroke="#000" stroke-width="6"/>
    <path d="M833 895l22 14v22l-22 16-22-16v-22zM812 912l21 12 21-12M833 924v22" fill="#fff" stroke="#000" stroke-width="6"/>
    <path d="M1250 966h72v14h-72zM1254 992h64l-32 34z" fill="#cfcfcf" stroke="#444" stroke-width="4"/><path d="M1250 986h74" stroke="#444" stroke-width="8"/>
  </svg>
  <div class="closebar"><svg class="up"><use href="#i-chev"/></svg></div>
</aside>
</div>
</body>
</html>
```
FILE: styles.css
```css
* { box-sizing: border-box; }
body { margin: 0; background: #fff; color: #3f3f3f; font: 12px/16px "Noto Sans", "Open Sans", sans-serif; }
button, input, select { font: inherit; color: inherit; }
button { border: 0; padding: 0; margin: 0; background: none; }
svg { fill: none; stroke: #666; stroke-width: 1.5px; display: block; flex: none; }
.sprite { position: absolute; width: 0; height: 0; }
a { color: inherit; text-decoration: none; }
h1, h2 { margin: 0; font-size: 12px; font-weight: 400; }

.page { display: grid; grid-template-columns: 2066fr 494fr; align-items: start; }
.app { position: relative; display: flex; flex-direction: column; height: 100vh; min-width: 0; padding-top: 3px; }
.tri { width: 0; height: 0; border: 3px solid transparent; border-top: 4px solid #444; border-bottom: 0; flex: none; }
.tri.up { border-top: 0; border-bottom: 4px solid #666; transform: none; }

/* title bar */
.titlebar { display: grid; grid-template-columns: 1010fr auto 765fr; height: 30px; background: #d9d9d9; }
.quick { display: flex; align-items: center; height: 25px; }
.logo { width: 26px; height: 25px; background: #1d4fa5; border-right: 4px solid #12346e; color: #fff; font-weight: 700; font-size: 14px; line-height: 24px; text-align: center; }
.q { width: 26px; height: 24px; display: flex; align-items: center; justify-content: center; flex: none; }
.q svg { width: 18px; height: 18px; }
.q.gap { margin-right: 4px; }
.q.letter { font-size: 17px; color: #999; }
.q.on { background: #dbeefa; border: 1px solid #7cc3e8; }
.q.faint { opacity: .4; }
.q.flip svg { transform: scaleX(-1); }
.q.x svg { width: 12px; height: 12px; }
.drop { width: 12px; height: 24px; display: flex; align-items: center; justify-content: center; flex: none; }
.drop:empty::before { content: ""; border: 3px solid transparent; border-top: 4px solid #444; border-bottom: 0; }
.drop.wide { width: 18px; }
.drop svg { width: 10px; height: 10px; }
.sep { width: 1px; height: 24px; margin: 0 4px 0 3px; background: #bcbcbc; }
.titlebar h1 { padding-top: 2px; color: #555; white-space: nowrap; }
.account { display: flex; align-items: center; justify-content: flex-end; height: 25px; }
.back { width: 12px; }
.back::before { content: ""; display: block; width: 0; border: 4px solid transparent; border-right-color: #333; border-left: 0; }
.user { display: flex; align-items: center; gap: 6px; }
.user svg { width: 18px; height: 18px; }
.cart { margin-left: 4px; }
.help { width: 18px; height: 18px; margin: 0 6px; border: 1px solid #444; border-radius: 9px; background: #f0f4fb; color: #2b5fb4; font-weight: 700; line-height: 16px; }
.win { display: flex; margin-left: 58px; }

.tabs { display: flex; height: 22px; background: #d9d9d9; line-height: 21px; }
.tabs a { padding: 0 11px; white-space: nowrap; }
.tabs .file { background: #1f77b4; color: #fff; padding: 0 10px; }
.tabs .ctx { background: #83b33a; padding: 0 8px; margin: 0 25px 0 3px; height: 21px; }
.fold { width: 16px; height: 10px; margin: 6px 0; border: 1px solid #34446c; border-radius: 2px; background: #f2f4f8; display: flex; align-items: center; justify-content: center; }
.fold i { border: 3px solid transparent; border-bottom: 3px solid #333; border-top: 0; }

/* ribbon */
.ribbon { display: grid; height: 102px; background: #f4f4f4;
  grid-template-columns: 90fr 91fr 265fr 170fr 106fr 150fr 101fr 184fr 61fr 77fr 77fr 58fr 443fr 148fr 45fr; }
.panel { display: flex; flex-direction: column; min-width: 0; border-right: 2px solid #ececec; }
.body { flex: 1; display: flex; padding: 6px 0 0; min-height: 0; }
.cap { height: 20px; line-height: 20px; display: flex; justify-content: center; align-items: center; gap: 9px; }
.cap .tri { border-width: 5px 4px 0; }
.cap svg { width: 8px; height: 8px; }
.center { justify-content: center; }
.big { display: flex; flex-direction: column; align-items: center; white-space: nowrap; line-height: 16px; position: relative; align-self: flex-start; }
.big svg { width: 34px; height: 34px; margin-bottom: 5px; }
.big .ptr { width: 20px; }
.big .tri { margin-top: 3px; }
.big.active, .quad .active { background: #dbeef8; outline: 1px solid #8ccbe8; }
.big.active { width: 48px; height: 76px; margin-top: -2px; padding-top: 3px; }
.off { color: #c6c6c6; }
.off .tri { opacity: .5; }
.quad { display: grid; grid-template-columns: 40px 36px; grid-template-rows: 37px 37px; gap: 1px 4px; padding-left: 5px; }
.quad button { display: grid; place-items: center; }
.quad svg { width: 35px; height: 35px; }
.stack { display: flex; flex-direction: column; gap: 8px; }
.stack svg { width: 18px; height: 18px; }
.stack .row { height: 18px; }
.row { display: flex; align-items: center; gap: 6px; white-space: nowrap; }
.row .tri { margin-left: 6px; }
.stack.two { padding-top: 14px; }
.draw { padding-left: 8px; gap: 8px; }
.draw .stack { width: 70px; padding-top: 1px; }
.draw .row { gap: 5px; }
.draw .row svg { width: 16px; height: 16px; }
.gallery { display: grid; grid-template-columns: repeat(5, 24px) 14px; grid-template-rows: repeat(3, 24px); place-items: center; width: 134px; height: 74px; background: #fff; border: 1px solid #ddd; }
.gallery svg { width: 18px; height: 18px; }
.gallery .more { width: 9px; height: 9px; }
.faces { display: grid; gap: 6px; align-content: start; margin-left: -2px; }
.faces svg { width: 33px; height: 33px; }
.work { padding-left: 14px; gap: 19px; }
.clip { padding-left: 13px; gap: 17px; }
.geo { padding-left: 7px; justify-content: space-between; padding-right: 3px; }
.geo .stack:last-child { width: 33px; }
.geo .stack:last-child .row { gap: 2px; }
.modify { padding-left: 9px; gap: 16px; }
.pair { display: grid; gap: 9px; align-content: start; }
.pair svg { width: 28px; height: 32px; }
.tools { display: grid; grid-template-columns: repeat(5, 18px); gap: 8px 9px; align-content: start; }
.tools svg { width: 18px; height: 18px; }
.meas { display: grid; grid-template-columns: 34px 8px; gap: 4px 6px; padding-left: 7px; place-items: center; align-content: start; }
.meas svg { width: 34px; height: 34px; }
.green { border-top: 2px solid #83b33a; }
.green .body { padding-top: 4px; }
.green .cap { height: 21px; background: #e9efe1; margin: 0 0 0 2px; }
.big.aside .tri { position: absolute; right: -8px; top: 54px; margin: 0; }
.element { gap: 7px; padding-left: 6px; }
.element .stack { margin-left: -4px; padding-top: 1px; }
.element .row { gap: 4px; }
.finish { gap: 6px; padding-left: 6px; }
.finish .big svg { width: 26px; height: 26px; margin: 4px 5px 9px; }
.editor .cap { background: #dfe4f0; }
.rest { background: #e9efe1; }

.options { display: flex; align-items: center; height: 31px; background: #e9efe1; border-top: 1px solid #d5d8d0; border-bottom: 2px solid #c3c3c3; padding-left: 8px; }
.mode { width: 105px; margin-right: 20px; border-right: 1px solid #777; line-height: 24px; }
.pick { display: flex; align-items: center; position: relative; border-bottom: 1px solid #a5a5a5; }
.pick select { appearance: none; border: 0; background: none; width: 100%; padding: 0 0 0 4px; outline: 0; }
.pick svg { width: 10px; height: 10px; margin-left: -16px; margin-right: 6px; }
.options .pick { width: 122px; height: 22px; margin-left: 1px; }
.radio { display: flex; align-items: center; margin-left: 8px; }
.radio input { appearance: none; width: 13px; height: 13px; margin: 0 2px 0 0; border: 1px solid #666; border-radius: 7px; }

/* palettes */
.work-area { flex: 1; min-height: 0; display: grid; grid-template-columns: 404fr 1662fr; }
.side { display: flex; flex-direction: column; min-height: 0; min-width: 0; border-right: 2px solid #bdbdbd; background: #efefef; }
.side h2 { display: flex; justify-content: space-between; align-items: center; height: 19px; flex: none; background: #d8d8d8; padding: 0 3px; color: #555; }
.side h2 svg { width: 10px; height: 10px; }
.props { display: flex; flex-direction: column; flex: 0 0 451px; background: linear-gradient(#efefef 129px, #fff 129px); }
.typebox { display: flex; align-items: center; justify-content: space-between; height: 76px; margin-right: 3px; padding: 0 8px 0 4px; border: 1px solid #cfcfcf; background: #f5f5f5; }
.thumb { width: 70px; height: 71px; stroke: none; border: 1px solid #ccc; background: #fff; }
.thumb text { fill: #fff; font: 700 36px "Open Sans", sans-serif; }
.instance { display: flex; justify-content: space-between; height: 34px; padding: 2px 9px 6px 1px; }
.instance .pick { width: 281px; background: #f6f6f6; }
.instance button { display: flex; align-items: center; gap: 5px; color: #b4b4b4; }
.instance button svg { width: 18px; height: 18px; stroke: #aaa; }
table { border-collapse: collapse; table-layout: fixed; width: 402px; background: #fff; color: #222; }
.c1 { width: 195px; } .c2 { width: 193px; }
td, th { height: 19px; padding: 0 2px 0 3px; line-height: 17px; border: 1px solid #ebebeb; text-align: left; white-space: nowrap; overflow: hidden; }
td:first-child { padding-left: 9px; }
td:last-child { padding: 0 1px; overflow: visible; }
.head { height: 20px; background: #e4e4e4; }
.head td:last-child svg { width: 8px; height: 10px; margin: 0 0 0 -2px; }
.head th, .head td { border: 0; color: #444; }
.ro { color: #999; }
.focus { border: 1px solid #222; }
.focus input, .only input { appearance: none; display: block; width: 12px; height: 12px; margin: 0; background: #808080; position: relative; }
.focus input::after, .only input::after { content: ""; position: absolute; left: 4px; top: 1px; width: 5px; height: 8px; border: solid #fff; border-width: 0 2px 2px 0; transform: rotate(40deg); }
.edit { padding: 1px; }
.edit button { display: block; width: 100%; height: 16px; line-height: 14px; border: 1px solid #ccc; background: #f4f4f4; }
td:last-child button { display: block; width: 10px; height: 16px; border: 1px solid #ccc; background: #fafafa; }
.sort { margin-top: auto; display: flex; align-items: center; height: 29px; padding: 0 5px 2px 3px; gap: 3px; background: #eee; border-bottom: 2px solid #c4c4c4; }
.sort button { display: flex; align-items: center; justify-content: center; width: 24px; height: 24px; gap: 2px; }
.sort .on { width: 22px; background: #8fd0ef; border-radius: 2px; }
.sort .on svg { width: 18px; height: 18px; }
.sort span { display: flex; flex-direction: column; font-size: 9px; line-height: 8px; }
.sort b { color: #3f93d4; }
.sort svg { width: 6px; height: 16px; }
.sort .apply { width: 74px; height: 19px; margin-left: auto; border: 1px solid #ccc; color: #b0b0b0; }
.browser { flex: 1; min-height: 0; display: flex; flex-direction: column; background: #fff; }
.search { display: flex; align-items: center; gap: 9px; height: 26px; margin: 9px 9px 10px 9px; padding-left: 9px; border: 1px solid #ddd; flex: none; }
.search svg { width: 18px; height: 18px; }
.search input { border: 0; outline: 0; background: none; flex: 1; padding: 0; }
.search input::placeholder { color: #aaa; }
.treebox { flex: 1; min-height: 0; display: flex; }
.tree { flex: 1; display: flex; flex-direction: column; min-height: 0; margin: 0; padding: 0; list-style: none; font-size: 14px; line-height: 20px; color: #333; }
.tree li { flex: 1; position: relative; display: flex; align-items: center; min-height: 0; padding-left: 50px; white-space: nowrap; }
.tree .l0 { padding-left: 29px; } .tree .l2 { padding-left: 71px; } .tree .l3 { padding-left: 92px; } .tree .l4 { padding-left: 113px; }
.tree svg { width: 21px; height: 20px; margin-right: 6px; }
.tree i { position: absolute; }
.tree .minus i, .tree .plus i { width: 11px; height: 11px; left: 28px; top: 7px; background: linear-gradient(#808080, #808080) center / 11px 2px no-repeat; }
.tree .plus i { background: linear-gradient(#808080, #808080) center / 11px 3px no-repeat, linear-gradient(#808080, #808080) center / 3px 11px no-repeat; }
.tree .l0 i { left: 7px; } .tree .l2 i { left: 49px; } .tree .l3 i { left: 70px; }
.tree .g::before { content: ""; position: absolute; left: 12px; top: 0; width: 12px; height: 14px; border-left: 1px dashed #bbb; border-bottom: 1px dashed #bbb; }
.tree .l2::before { left: 33px; } .tree .l3::before { left: 54px; } .tree .l4::before { left: 75px; width: 32px; }
.tree .trunk::after { content: ""; position: absolute; left: 12px; top: 0; bottom: 0; border-left: 1px dashed #bbb; }
.tree .l1:not(.last)::after { content: ""; position: absolute; left: 12px; top: 13px; bottom: 0; border-left: 1px dashed #bbb; }
.tree .l2:not(.last)::before { border-bottom: 0; height: 100%; background: linear-gradient(90deg, #bbb 4px, transparent 4px, transparent 6px, #bbb 6px) 0 13px / 12px 1px no-repeat; }
.tree .two { background: linear-gradient(#bbb 4px, transparent 4px) 33px 0 / 1px 6px repeat-y; }
.tree .sel { background: #f0f0f0; box-shadow: inset 0 0 0 1px #e2e2e2; }
.vbar { width: 20px; display: flex; flex-direction: column; align-items: center; justify-content: space-between; background: #e9e9e9; padding: 4px 0 7px; }
.vbar svg { width: 10px; height: 10px; }
.vbar i { width: 9px; height: 114px; margin-bottom: 142px; border-radius: 4px; background: #8a8a8a; }
.up { transform: rotate(180deg); }

/* drawing view */
.view { display: flex; flex-direction: column; min-width: 0; min-height: 0; background: #fff; padding-left: 4px; }
.viewtabs { display: flex; align-items: center; height: 23px; margin-left: -4px; background: #cbcbcb; border-bottom: 2px solid #fff; padding-right: 3px; }
.viewtabs a { display: flex; align-items: center; gap: 10px; width: 140px; height: 21px; padding-left: 8px; background: #d2d2d2; }
.viewtabs svg { width: 14px; height: 14px; }
.viewtabs .cur { width: 138px; background: #fff; padding-right: 6px; }
.viewtabs .x { width: 9px; height: 9px; margin-left: auto; }
.viewtabs .menu { width: 10px; height: 10px; margin-left: auto; }
.stage { flex: 1; min-height: 0; display: grid; grid-template-columns: minmax(0, 1fr) 17px; grid-template-rows: minmax(0, 1fr) 19px; border-bottom: 1px solid #fff; }
.scene { width: 100%; height: 100%; stroke: none; }
.dimtext { fill: #2b4da3; font: 13px "Noto Sans", sans-serif; }
.face, .face2 { fill: #6d747c; font-family: "Liberation Sans Narrow", "Noto Sans", sans-serif; font-weight: 700; stroke: none; }
.face2 { fill: #3c4a5a; }
.vscroll { display: flex; flex-direction: column; align-items: center; justify-content: space-between; padding: 5px 0 4px; background: #e8e8e8; }
.vscroll svg { width: 10px; height: 10px; }
.vscroll i { width: 9px; height: 19px; border-radius: 4px; background: #808080; }
.viewbar { display: flex; align-items: center; gap: 10px; background: #f3f3f3; }
.viewbar span { width: 50px; margin: 0 -1px 0 30px; }
.viewbar svg { width: 18px; height: 18px; }
.viewbar .left, .viewbar .right { width: 10px; height: 10px; transform: rotate(90deg); margin-left: -2px; }
.viewbar .right { transform: rotate(-90deg); margin: 0 5px 0 -4px; }
.track { flex: 1; height: 19px; margin-left: -6px; background: #e8e8e8; border: solid #d8d8d8; border-width: 0 1px; display: flex; align-items: center; justify-content: center; }
.track i { width: 20px; height: 9px; border-radius: 4px; background: #808080; }
.grip { background: #f0f0f0; font-size: 14px; text-align: center; line-height: 18px; }

.status { display: flex; align-items: center; height: 26px; background: #f4f4f4; }
.hint { width: 671px; height: 26px; padding-left: 2px; line-height: 26px; border-bottom: 1px solid #8a9b9f; }
.bars { width: 836px; }
.only { display: flex; align-items: center; gap: 3px; }
.only input { width: 13px; height: 13px; }
.sel-tools { display: flex; align-items: center; gap: 8px; margin: 0 78px 0 auto; }
.sel-tools svg { width: 20px; height: 20px; }
.sel-tools span { margin-left: -8px; }

/* callouts drawn over the window */
.marks { position: absolute; left: 0; top: 0; width: 100%; height: 100%; pointer-events: none; stroke: none; }

.inset { display: grid; grid-template-columns: minmax(0, 1fr) 35px; aspect-ratio: 494 / 450; border: 3px solid #e37f14; }
.closeup { width: 100%; height: 100%; stroke: none; }
.closebar { background: #e8e8e8; }
.closebar svg { width: 100%; height: 36px; padding: 8px 0; background: #efefef; border-top: 1px solid #ddd; }
```
